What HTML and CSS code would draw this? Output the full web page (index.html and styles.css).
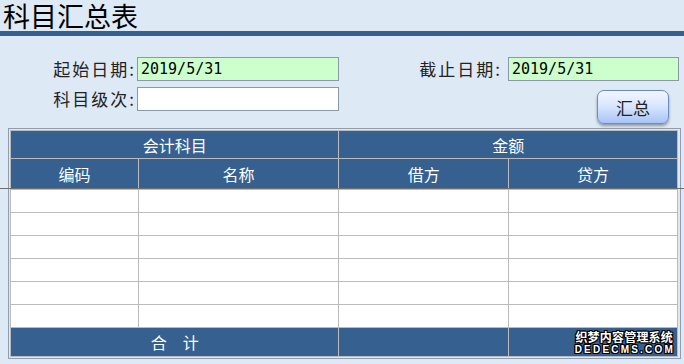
FILE: index.html
```html
<!DOCTYPE html>
<html lang="zh-CN">
<head>
<meta charset="utf-8">
<title>科目汇总表</title>
<link rel="stylesheet" href="styles.css">
</head>
<body>
<div class="page">
  <h1 class="title">科目汇总表</h1>
  <div class="form">
    <div class="group left">
      <label class="lbl">起始日期:</label>
      <input class="field date wide" type="text" value="2019/5/31">
      <label class="lbl">科目级次:</label>
      <input class="field wide" type="text" value="">
    </div>
    <div class="group right">
      <div class="row">
        <label class="lbl">截止日期:</label>
        <input class="field date narrow" type="text" value="2019/5/31">
      </div>
      <button class="btn" type="button">汇总</button>
    </div>
  </div>
  <div class="frame">
    <table class="grid">
      <tr class="h1">
        <th colspan="2">会计科目</th>
        <th colspan="2">金额</th>
      </tr>
      <tr class="h2">
        <th class="c1">编码</th>
        <th class="c2">名称</th>
        <th class="c3">借方</th>
        <th class="c4">贷方</th>
      </tr>
      <tr class="d"><td></td><td></td><td></td><td></td></tr>
      <tr class="d"><td></td><td></td><td></td><td></td></tr>
      <tr class="d"><td></td><td></td><td></td><td></td></tr>
      <tr class="d"><td></td><td></td><td></td><td></td></tr>
      <tr class="d"><td></td><td></td><td></td><td></td></tr>
      <tr class="d"><td></td><td></td><td></td><td></td></tr>
      <tr class="f">
        <th colspan="2">合　计</th>
        <th></th>
        <th class="mark"><span class="m1">织梦内容管理系统</span><span class="m2">DEDECMS.COM</span></th>
      </tr>
    </table>
  </div>
  <div class="rule"></div>
</div>
</body>
</html>
```
FILE: styles.css
```css
html, body {
  margin: 0;
  padding: 0;
  background: #dde9f5;
}
body {
  font-family: "Noto Sans CJK SC", "Noto Sans", sans-serif;
  color: #222;
}
.page {
  position: relative;
  width: 684px;
  height: 364px;
  overflow: hidden;
}
.title {
  margin: 0;
  height: 31px;
  padding-left: 3px;
  font-size: 27px;
  font-weight: normal;
  line-height: 31px;
  color: #000;
  border-bottom: 5px solid #35608f;
}
.form {
  box-sizing: border-box;
  height: 92px;
  padding: 21px 5px 0 0;
  display: flex;
  justify-content: space-between;
  align-items: flex-start;
}
.group.left {
  display: grid;
  grid-template-columns: 137px 202px;
  row-gap: 6px;
  align-items: center;
}
.lbl {
  font-size: 17px;
  letter-spacing: 2px;
  line-height: 24px;
  text-align: right;
  padding-right: 1px;
  color: #222;
}
.group.right {
  display: flex;
  flex-direction: column;
  align-items: flex-end;
}
.row {
  display: flex;
  align-items: center;
  gap: 5px;
}
.field {
  box-sizing: border-box;
  height: 24px;
  margin: 0;
  border: 1px solid #8a98a8;
  background: #fff;
  padding: 0 3px;
  font-family: "DejaVu Sans Mono", monospace;
  font-size: 15px;
  color: #000;
  outline: none;
}
.field.date { background: #ccffcc; }
.field.wide { width: 202px; }
.field.narrow { width: 171px; }
.btn {
  box-sizing: border-box;
  margin: 9px 10px 0 0;
  width: 72px;
  height: 34px;
  border: 1px solid #6a8cc2;
  border-radius: 7px;
  background: linear-gradient(#f2f6ff, #dbe7ff 45%, #a7c4f7);
  box-shadow: 0 2px 3px rgba(0,0,0,0.35);
  font-family: "Noto Sans CJK SC", sans-serif;
  font-size: 17px;
  color: #222;
  padding: 0;
}
.frame {
  box-sizing: border-box;
  margin-left: 8px;
  width: 673px;
  padding: 1px 2px 1px 1px;
  border: 1px solid #8d9db3;
  background: #e6e6e6;
}
.grid {
  border-collapse: separate;
  border-spacing: 0;
  width: 668px;
  border-top: 1px solid #bbb;
  border-left: 1px solid #bbb;
}
.grid th, .grid td {
  box-sizing: border-box;
  padding: 0;
  border-right: 1px solid #bbb;
  border-bottom: 1px solid #bbb;
}
.grid th {
  background: #36608f;
  color: #fff;
  font-weight: normal;
  font-size: 16px;
  text-align: center;
}
.grid td { background: #fff; }
.h1 { height: 28px; }
.h2 { height: 31px; }
.d { height: 23px; }
.f { height: 29px; }
.c1 { width: 128px; }
.c2 { width: 201px; }
.c3 { width: 170px; }
.c4 { width: 169px; }
.grid th.mark {
  text-align: right;
  padding-right: 4px;
  vertical-align: middle;
}
.m1, .m2 {
  display: block;
  color: #fff;
  font-weight: bold;
  text-shadow: 1px 0 0 #000, -1px 0 0 #000, 0 1px 0 #000, 0 -1px 0 #000, 1px 1px 0 #000, -1px -1px 0 #000, 1px -1px 0 #000, -1px 1px 0 #000;
}
.m1 {
  font-size: 12px;
  line-height: 14px;
  letter-spacing: 0.2px;
}
.m2 {
  font-family: "Liberation Sans", sans-serif;
  font-size: 10px;
  line-height: 11px;
  letter-spacing: 2.2px;
  margin-right: -2px;
}
.rule {
  position: absolute;
  left: 0;
  top: 188px;
  width: 684px;
  height: 1px;
  background: #6e6e6e;
}
```
